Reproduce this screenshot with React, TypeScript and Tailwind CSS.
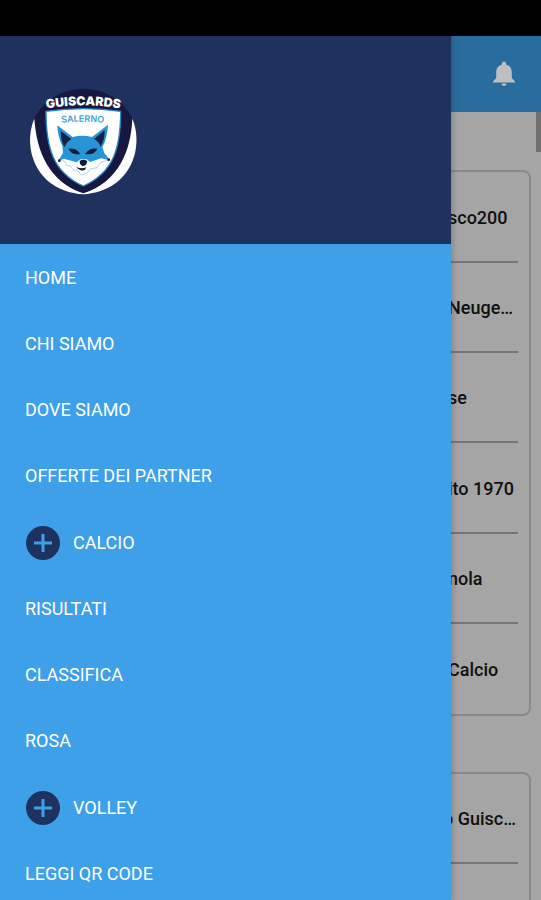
import React from 'react';

interface MenuEntry {
  label: string;
  expandable?: boolean;
}

const menu: MenuEntry[] = [
  { label: 'HOME' },
  { label: 'CHI SIAMO' },
  { label: 'DOVE SIAMO' },
  { label: 'OFFERTE DEI PARTNER' },
  { label: 'CALCIO', expandable: true },
  { label: 'RISULTATI' },
  { label: 'CLASSIFICA' },
  { label: 'ROSA' },
  { label: 'VOLLEY', expandable: true },
  { label: 'LEGGI QR CODE' },
];

const teams = ['sco200', 'Neuge…', 'se', 'ito 1970', 'nola', 'Calcio'];

function GuiscardsLogo() {
  return (
    <svg viewBox="0 0 390 360" className="w-[130px] h-[120px]" role="img" aria-label="Guiscards Salerno">
      <defs>
        <path id="arc-top" d="M50 92 Q190 60 330 92" />
        <path id="arc-sub" d="M100 132 Q188 118 276 132" />
      </defs>
      {/* Outer badge */}
      <path d="M190 26 C270 26 346 84 350 170 C350 262 285 334 190 338 C95 334 30 262 30 170 C34 84 110 26 190 26Z" fill="#17183f" />
      <path d="M43 116 C10 190 36 330 190 343 C344 330 370 190 337 116 C332 216 296 304 190 340 C86 304 50 216 43 116Z" fill="#fff" />
      <path d="M46 108 C54 212 96 310 190 338 C284 310 326 212 334 108 L300 76 L80 76Z" fill="#17183f" />
      {/* Inner shield */}
      <path d="M78 94 Q190 78 302 94 C302 198 284 276 190 318 C96 276 78 198 78 94Z" fill="#fff" stroke="#2789cf" strokeWidth="4" />
      <text fontFamily="Inter, sans-serif" fontWeight="900" fontSize="37" fill="#fff" textAnchor="middle">
        <textPath href="#arc-top" startOffset="50%">GUISCARDS</textPath>
      </text>
      <text fontFamily="Inter, sans-serif" fontWeight="600" fontSize="27" fill="#3b9fdd" textAnchor="middle">
        <textPath href="#arc-sub" startOffset="50%">SALERNO</textPath>
      </text>
      {/* Fox head */}
      <path
        d="M112 136 L158 171 Q188 164 216 171 L264 134 Q262 174 247 202 L253 219 L270 241 L249 240 L228 247 L200 255 L188 244 L178 255 L150 247 L130 239 L115 242 L129 219 L127 198 Q113 170 112 136Z"
        fill="#2794d8"
      />
      <path d="M122 152 L154 177 Q139 186 134 202 Q121 180 122 152Z M254 150 L222 177 Q238 186 242 200 Q255 178 254 150Z" fill="#15234a" />
      <path d="M145 206 Q168 203 181 222 Q156 227 145 206Z M232 206 Q209 203 195 222 Q222 227 232 206Z" fill="#101936" />
      <path d="M115 242 L132 236 L170 247 L182 238 L200 238 L210 246 L244 235 L270 241 L249 246 Q235 270 218 266 L202 283 L184 286 L167 269 Q142 271 132 246Z" fill="#fff" />
      <path d="M116 242 L134 243 L141 258 L151 257 L160 270 L171 270 L184 285 L203 278 L210 267 L231 263 L242 247 L267 240" fill="none" stroke="#8cbde0" strokeWidth="2" />
      <path d="M179 243 Q190 236 202 243 L198 255 L188 259 L180 252Z M169 260 Q182 268 199 262 L194 270 Q179 275 169 260Z" fill="#101936" />
      <circle cx="118" cy="242" r="4" fill="#101936" />
      <circle cx="266" cy="239" r="4" fill="#101936" />
    </svg>
  );
}

function MenuItem({ label, expandable }: MenuEntry) {
  if (expandable) {
    return (
      <button type="button" aria-expanded="false" className="flex h-[67px] w-full items-center gap-3 px-[25px] text-left">
        <svg viewBox="0 0 36 36" className="h-9 w-9" aria-hidden="true">
          <circle cx="18" cy="18" r="17" fill="#1f325f" />
          <path d="M18 9v18M9 18h18" stroke="#3da0e8" strokeWidth="3" />
        </svg>
        {label}
      </button>
    );
  }
  return (
    <a href="#" className="flex h-[66px] items-center px-[25px]">
      {label}
    </a>
  );
}

export default function App() {
  return (
    <div className="relative flex h-screen flex-col overflow-hidden bg-[#a5a5a5] font-['Roboto',sans-serif]">
      <div className="h-9 shrink-0 bg-black" />
      <header className="flex h-[76px] shrink-0 items-center justify-end bg-[#296d9e] px-[22px]">
        <button type="button" aria-label="Notifiche" className="text-[#bfbfbf]">
          <svg viewBox="0 0 30 30" className="h-[30px] w-[30px]" fill="currentColor" aria-hidden="true">
            <path d="M15 2.500C16.200 2.500 17 3.400 17 4.600V5.500C21 6.600 22.800 9.800 22.800 13.500V19L26 22.500V23.500H4V22.500L7.200 19V13.500C7.200 9.800 9 6.600 13 5.500V4.600C13 3.400 13.800 2.500 15 2.500ZM12.500 24.500H17.500C17.500 26 16.500 27 15 27S12.500 26 12.500 24.500Z" />
          </svg>
        </button>
      </header>

      {/* Standings behind the drawer */}
      <main className="relative flex-1 overflow-hidden px-2.5 pt-[58px] text-lg font-medium text-[#101010]">
        <section className="rounded-lg border-2 border-[#8a8a8a] px-[11px]">
          {teams.map((team) => (
            <div
              key={team}
              className="flex h-[90px] items-center justify-end border-b-2 border-[#767676] pt-0.5 last:border-b-0 nth-[3n+1]:h-[91px]"
            >
              <span className="w-[70px] whitespace-nowrap">{team}</span>
            </div>
          ))}
        </section>
        <section className="mt-14 rounded-lg border-2 border-[#8a8a8a] px-[11px]">
          <div className="flex h-[90px] items-center justify-end border-b-2 border-[#767676] pt-0.5">
            <span className="w-[75px] whitespace-nowrap">o Guisc…</span>
          </div>
          <div className="h-[90px]" />
        </section>
        <div className="absolute right-0 top-0 h-10 w-[5px] bg-[#707070]" />
      </main>

      {/* Drawer */}
      <aside className="absolute bottom-0 left-0 top-9 w-5/6 overflow-hidden bg-[#3da0e8] shadow-[2px_0_6px_rgba(0,0,0,0.2)]">
        <div className="h-[208px] bg-[#1f325f] pl-5 pt-11">
          <GuiscardsLogo />
        </div>
        <nav className="pt-px text-lg text-white">
          <ul>
            {menu.map((item) => (
              <li key={item.label}>
                <MenuItem {...item} />
              </li>
            ))}
          </ul>
        </nav>
      </aside>
    </div>
  );
}
